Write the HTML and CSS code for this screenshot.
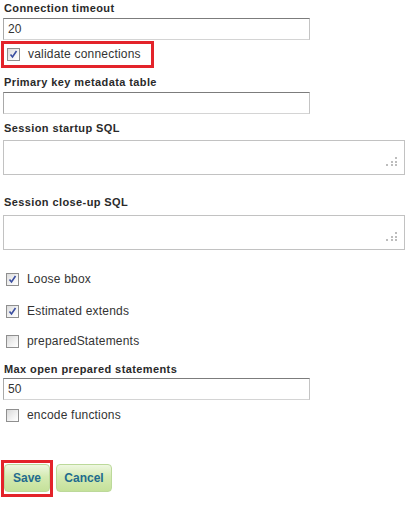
FILE: index.html
```html
<!DOCTYPE html>
<html>
<head>
<meta charset="utf-8">
<link rel="stylesheet" href="styles.css">
</head>
<body>
<form class="form">
  <div class="label">Connection timeout</div>
  <div class="input">20</div>
  <div class="highlight hl-check">
    <div class="check-row">
      <span class="cb checked"><svg viewBox="0 0 13 13" width="13" height="13"><path d="M3.5 6.5 L5.5 9 L9.5 3" fill="none" stroke="#3a4ea0" stroke-width="1.6"/></svg></span>
      <span class="cb-text">validate connections</span>
    </div>
  </div>
  <div class="label mt6">Primary key metadata table</div>
  <div class="input"></div>
  <div class="label mt6">Session startup SQL</div>
  <div class="textarea mt5"><svg class="grip" viewBox="0 0 12 10" width="12" height="10"><g fill="#bdbdbd"><rect x="9" y="0" width="2" height="2"/><rect x="5" y="4" width="2" height="2"/><rect x="9" y="4" width="2" height="2"/><rect x="0" y="7" width="2" height="2"/><rect x="5" y="7" width="2" height="2"/><rect x="9" y="7" width="2" height="2"/></g></svg></div>
  <div class="label mt19">Session close-up SQL</div>
  <div class="textarea mt6"><svg class="grip" viewBox="0 0 12 10" width="12" height="10"><g fill="#bdbdbd"><rect x="9" y="0" width="2" height="2"/><rect x="5" y="4" width="2" height="2"/><rect x="9" y="4" width="2" height="2"/><rect x="0" y="7" width="2" height="2"/><rect x="5" y="7" width="2" height="2"/><rect x="9" y="7" width="2" height="2"/></g></svg></div>
  <div class="check-row plain mt23">
    <span class="cb checked"><svg viewBox="0 0 13 13" width="13" height="13"><path d="M3.5 6.5 L5.5 9 L9.5 3" fill="none" stroke="#3a4ea0" stroke-width="1.6"/></svg></span>
    <span class="cb-text">Loose bbox</span>
  </div>
  <div class="check-row plain mt19">
    <span class="cb checked"><svg viewBox="0 0 13 13" width="13" height="13"><path d="M3.5 6.5 L5.5 9 L9.5 3" fill="none" stroke="#3a4ea0" stroke-width="1.6"/></svg></span>
    <span class="cb-text">Estimated extends</span>
  </div>
  <div class="check-row plain mt17">
    <span class="cb"></span>
    <span class="cb-text">preparedStatements</span>
  </div>
  <div class="label mt13">Max open prepared statements</div>
  <div class="input mt2">50</div>
  <div class="check-row plain mt9">
    <span class="cb"></span>
    <span class="cb-text">encode functions</span>
  </div>
  <div class="buttons">
    <div class="highlight hl-btn"><button type="button" class="btn">Save</button></div>
    <button type="button" class="btn btn-cancel">Cancel</button>
  </div>
</form>
</body>
</html>
```

FILE: styles.css
```css
html, body {
  margin: 0;
  padding: 0;
  background: #ffffff;
}
body {
  font-family: "Liberation Sans", Tahoma, Arial, sans-serif;
  color: #333333;
}
.form {
  padding: 0 0 0 3px;
  width: 402px;
}
.label {
  font-size: 11px;
  font-weight: bold;
  line-height: 15px;
  height: 15px;
  padding-top: 1px;
  margin-bottom: -1px;
  color: #2a2a2a;
  padding-left: 1px;
  letter-spacing: 0.4px;
}
.mt2 { margin-top: 2px !important; }
.mt5 { margin-top: 5px !important; }
.mt6 { margin-top: 6px !important; }
.mt9 { margin-top: 9px !important; }
.mt13 { margin-top: 13px !important; }
.mt17 { margin-top: 17px !important; }
.mt19 { margin-top: 19px !important; }
.mt23 { margin-top: 23px !important; }

.input {
  box-sizing: border-box;
  width: 307px;
  height: 22px;
  margin-top: 3px;
  border: 1px solid;
  border-color: #7c7c7c #c4c4c4 #d4d4d4 #a9a9a9;
  font-size: 12px;
  line-height: 20px;
  padding-left: 4px;
  color: #333;
}
.textarea {
  position: relative;
  box-sizing: border-box;
  width: 402px;
  height: 35px;
  border: 1px solid #c2c2c2;
}
.grip {
  position: absolute;
  right: 6px;
  bottom: 7px;
}
.highlight {
  box-sizing: border-box;
  border: 3px solid #e3232a;
}
.hl-check {
  width: 153px;
  height: 27px;
  margin-left: -2px;
  margin-top: 1px;
  padding-left: 3px;
  display: flex;
  align-items: center;
}
.check-row {
  display: flex;
  align-items: center;
  height: 13px;
}
.check-row.plain {
  padding-left: 3px;
}
.cb {
  box-sizing: border-box;
  width: 13px;
  height: 13px;
  border: 1px solid #8f8f8f;
  background: linear-gradient(135deg, #d9d9d9 0%, #f2f2f2 60%, #ffffff 100%);
  flex: none;
  position: relative;
}
.cb.checked {
  background: linear-gradient(135deg, #dcdcdc 0%, #f4f4f4 60%, #ffffff 100%);
}
.cb svg {
  position: absolute;
  left: -1px;
  top: -1px;
}
.cb-text {
  font-size: 12px;
  line-height: 13px;
  margin-left: 8px;
  color: #333;
  letter-spacing: 0.2px;
}
.buttons {
  display: flex;
  align-items: flex-start;
  margin-top: 38px;
  margin-left: -2px;
  gap: 3px;
}
.hl-btn {
  width: 52px;
  height: 37px;
  padding: 1px 0 0 0;
}
.btn {
  box-sizing: border-box;
  height: 28px;
  border: 1px solid #bcd99a;
  border-radius: 4px;
  background: linear-gradient(to bottom, #eef7e0 0%, #d4eab2 45%, #c5e19a 100%);
  font-family: "Liberation Sans", Tahoma, Arial, sans-serif;
  font-weight: bold;
  font-size: 12px;
  color: #1f6b8e;
  padding: 0;
  margin: 0;
  cursor: pointer;
}
.hl-btn .btn {
  width: 46px;
}
.btn-cancel {
  width: 56px;
  margin-top: 4px;
}
```
